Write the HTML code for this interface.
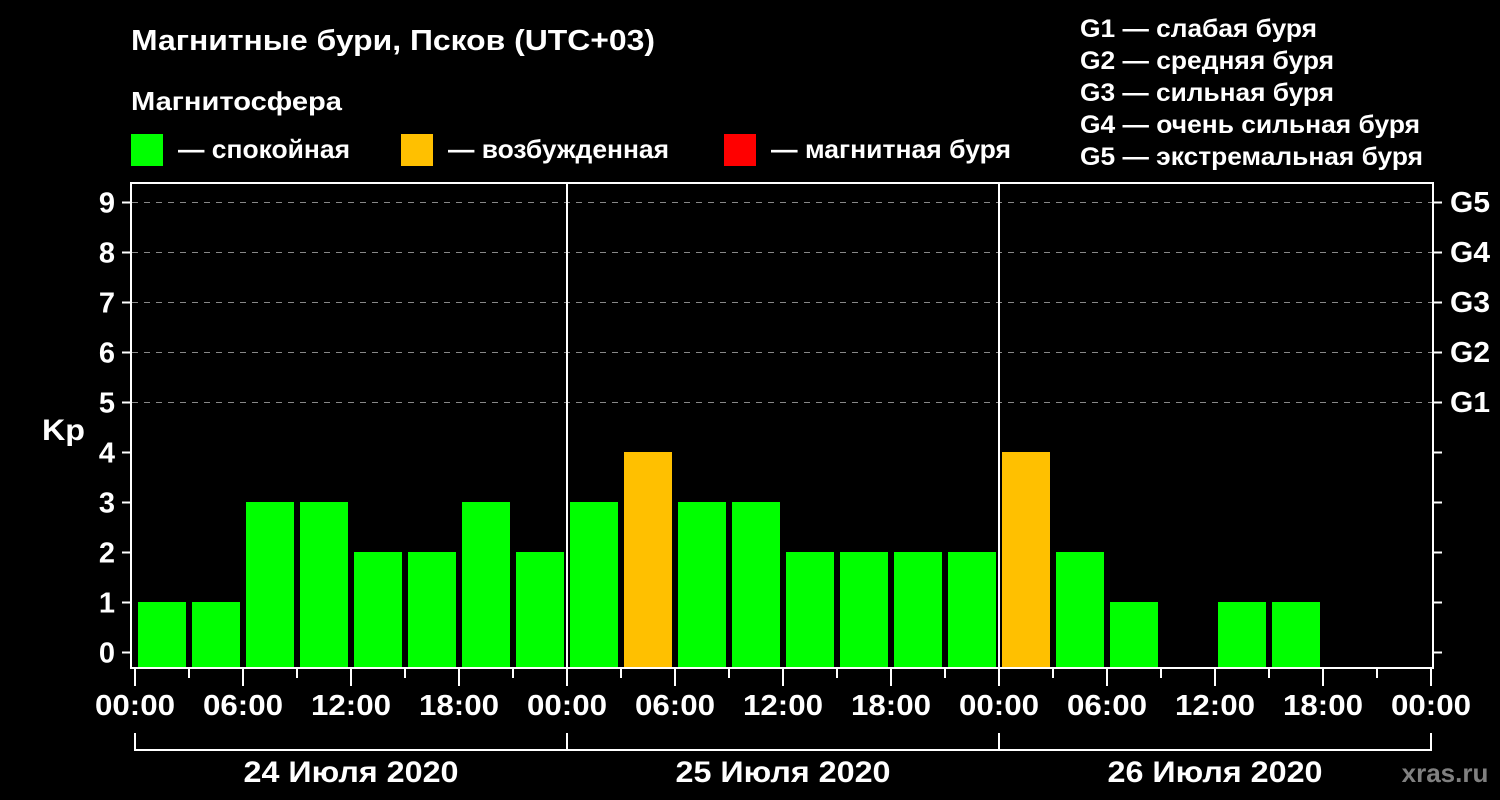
<!DOCTYPE html>
<html><head><meta charset="utf-8"><style>
body{margin:0;background:#000;width:1500px;height:800px;overflow:hidden;font-family:"Liberation Sans",sans-serif;font-weight:bold;color:#fff}
</style></head><body>
<svg width="1500" height="800" xmlns="http://www.w3.org/2000/svg" style="position:absolute;left:0;top:0" font-family="Liberation Sans, sans-serif" font-weight="bold" fill="#fff">
<text x="131" y="50" font-size="29" textLength="524" lengthAdjust="spacingAndGlyphs">Магнитные бури, Псков (UTC+03)</text>
<text x="131" y="110" font-size="26" textLength="211" lengthAdjust="spacingAndGlyphs">Магнитосфера</text>
<rect x="131" y="134" width="32" height="32" fill="#00ff00"/>
<text x="178" y="158" font-size="26" textLength="172" lengthAdjust="spacingAndGlyphs">— спокойная</text>
<rect x="401" y="134" width="32" height="32" fill="#ffc000"/>
<text x="448" y="158" font-size="26" textLength="221" lengthAdjust="spacingAndGlyphs">— возбужденная</text>
<rect x="724" y="134" width="32" height="32" fill="#ff0000"/>
<text x="771" y="158" font-size="26" textLength="240" lengthAdjust="spacingAndGlyphs">— магнитная буря</text>
<g font-size="25" lengthAdjust="spacingAndGlyphs">
<text x="1080" y="37" textLength="237" lengthAdjust="spacingAndGlyphs">G1 — слабая буря</text>
<text x="1080" y="69" textLength="254" lengthAdjust="spacingAndGlyphs">G2 — средняя буря</text>
<text x="1080" y="101" textLength="254" lengthAdjust="spacingAndGlyphs">G3 — сильная буря</text>
<text x="1080" y="133" textLength="340" lengthAdjust="spacingAndGlyphs">G4 — очень сильная буря</text>
<text x="1080" y="165" textLength="343" lengthAdjust="spacingAndGlyphs">G5 — экстремальная буря</text>
</g>
<g stroke="#888" stroke-width="1" stroke-dasharray="6,6">
<line x1="132" x2="1432" y1="202.5" y2="202.5"/><line x1="132" x2="1432" y1="252.5" y2="252.5"/><line x1="132" x2="1432" y1="302.5" y2="302.5"/><line x1="132" x2="1432" y1="352.5" y2="352.5"/><line x1="132" x2="1432" y1="402.5" y2="402.5"/>
</g>
<g id="bars"></g>
<g stroke="#fff" stroke-width="2" fill="none">
<path d="M131 183 H1433 V668 H131 Z"/>
<line x1="567" x2="567" y1="183" y2="668"/><line x1="999" x2="999" y1="183" y2="668"/>
<path d="M135 733 V750 H1431 V733 M567 733 V750 M999 733 V750"/>
</g>
<g id="ticks" stroke="#fff" stroke-width="2"></g>
<g font-size="29" text-anchor="end" id="ylab"></g>
<g font-size="29" id="glab">
<text x="1450" y="212" textLength="40" lengthAdjust="spacingAndGlyphs">G5</text><text x="1450" y="262" textLength="40" lengthAdjust="spacingAndGlyphs">G4</text><text x="1450" y="312" textLength="40" lengthAdjust="spacingAndGlyphs">G3</text><text x="1450" y="362" textLength="40" lengthAdjust="spacingAndGlyphs">G2</text><text x="1450" y="412" textLength="40" lengthAdjust="spacingAndGlyphs">G1</text>
</g>
<text x="42" y="440" font-size="30" textLength="43" lengthAdjust="spacingAndGlyphs">Kp</text>
<g font-size="29" text-anchor="middle" id="xlab"></g>
<g font-size="30" text-anchor="middle">
<text x="351" y="782" textLength="215" lengthAdjust="spacingAndGlyphs">24 Июля 2020</text><text x="783" y="782" textLength="215" lengthAdjust="spacingAndGlyphs">25 Июля 2020</text><text x="1215" y="782" textLength="215" lengthAdjust="spacingAndGlyphs">26 Июля 2020</text>
</g>
<text x="1445" y="782" font-size="26" fill="#808080" text-anchor="middle">xras.ru</text>
</svg>
<script>
var ns="http://www.w3.org/2000/svg";
function el(p,t,a,txt){var e=document.createElementNS(ns,t);for(var k in a)e.setAttribute(k,a[k]);if(txt!=null)e.textContent=txt;document.getElementById(p).appendChild(e);}
var v=[1,1,3,3,2,2,3,2,3,4,3,3,2,2,2,2,4,2,1,null,1,1,null,null];
v.forEach(function(k,i){if(k==null)return;var h=15+50*k;el("bars","rect",{x:138+54*i,y:667-h,width:48,height:h,fill:k>=5?"#ff0000":k==4?"#ffc000":"#00ff00"});});
for(var k=0;k<=9;k++){var y=652.5-50*k;el("ticks","line",{x1:122,x2:131,y1:y,y2:y});el("ticks","line",{x1:1433,x2:1442,y1:y,y2:y});el("ylab","text",{x:115,y:y+10},String(k));}
var labs=["00:00","06:00","12:00","18:00"];
for(var i=0;i<=24;i++){var x=135+54*i;el("ticks","line",{x1:x,x2:x,y1:669,y2:i%2==0?686:678});if(i%2==0)el("xlab","text",{x:x,y:715,textLength:80,lengthAdjust:"spacingAndGlyphs"},i==24?"00:00":labs[(i/2)%4]);}
</script>
</body></html>
